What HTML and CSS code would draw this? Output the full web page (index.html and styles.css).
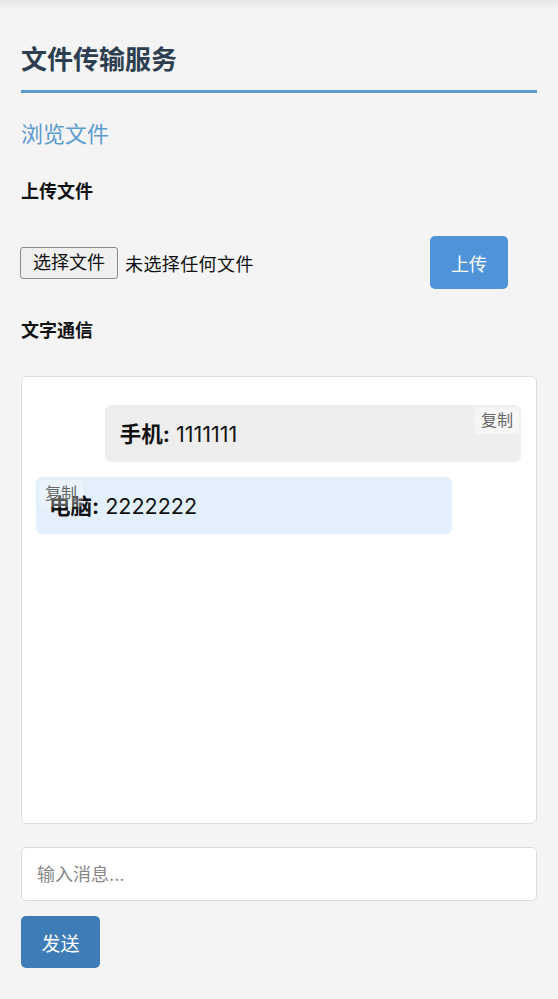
FILE: index.html
```html
<!DOCTYPE html>
<html lang="zh-CN">
<head>
    <meta charset="UTF-8">
    <meta name="viewport" content="width=device-width, initial-scale=1.0">
    <title>文件传输服务</title>
    <link rel="stylesheet" href="styles.css">
</head>
<body>
    <div class="container">
        <h1>文件传输服务</h1>

        <a class="browse-link" href="#">浏览文件</a>

        <h3>上传文件</h3>
        <form class="upload-form" onsubmit="return false;">
            <div class="file-picker">
                <span class="file-btn">选择文件</span>
                <span class="file-name">未选择任何文件</span>
            </div>
            <button class="upload-btn" type="submit">上传</button>
        </form>

        <h3>文字通信</h3>
        <div class="chat-box">
            <div class="message mine">
                <b>手机:</b> 1111111
                <span class="copy-btn">复制</span>
            </div>
            <div class="message other">
                <b>电脑:</b> 2222222
                <span class="copy-btn">复制</span>
            </div>
        </div>

        <input class="msg-input" type="text" placeholder="输入消息...">
        <button class="send-btn">发送</button>
    </div>
</body>
</html>
```

FILE: styles.css
```css
body {
    margin: 0;
    padding: 0;
    font-family: Inter, "Noto Sans CJK SC", sans-serif;
    background: linear-gradient(#e6e6e6, #f4f4f4 10px) no-repeat, #f4f4f4;
    color: #111;
}
.container {
    padding: 43px 21px 20px 21px;
}
h1 {
    margin: 0;
    font-size: 26px;
    line-height: 34px;
    color: #2c3e50;
    padding-bottom: 13px;
    border-bottom: 3px solid #5a9acf;
}
.browse-link {
    display: block;
    margin-top: 25px;
    font-size: 22px;
    line-height: 32px;
    color: #5a9bcf;
    text-decoration: none;
}
h3 {
    margin: 30px 0 0 0;
    font-size: 18px;
    line-height: 24px;
}
.upload-form {
    display: flex;
    align-items: center;
    justify-content: space-between;
    margin-top: 32px;
}
.file-picker {
    display: flex;
    align-items: center;
    font-size: 18px;
}
.file-btn {
    margin-left: -1px;
    padding: 2px 12px;
    background: #efefef;
    border: 1px solid #8a8a8a;
    border-radius: 3px;
    line-height: 26px;
}
.file-name {
    margin-left: 7px;
    letter-spacing: 0.4px;
}
.upload-btn {
    width: 78px;
    height: 53px;
    margin-right: 29px;
    background: #4f94d8;
    color: white;
    border: none;
    border-radius: 5px;
    font-family: inherit;
    font-size: 18px;
}
.upload-form + h3 {
    margin-top: 30px;
}
.chat-box {
    margin-top: 33px;
    height: 418px;
    padding: 28px 15px 0 15px;
    background: white;
    border: 1px solid #dcdcdc;
    border-radius: 6px;
}
.message {
    position: relative;
    width: 86%;
    height: 57px;
    box-sizing: border-box;
    padding: 0 15px;
    border-radius: 6px;
    font-size: 21.5px;
    line-height: 59px;
}
.message.mine {
    margin-left: auto;
    background: #eeeeee;
}
.message.other {
    margin-top: 15px;
    margin-left: -1px;
    padding-left: 13px;
    background: #e3f0fc;
}
.copy-btn {
    position: absolute;
    top: 2px;
    right: 2px;
    padding: 0 6px;
    font-size: 16px;
    line-height: 27px;
    color: #666;
    background: rgba(255, 255, 255, 0.45);
    border-radius: 3px;
}
.message.other .copy-btn {
    right: auto;
    left: 3px;
    top: 3px;
    background: rgba(255, 255, 255, 0.3);
}
.msg-input {
    display: block;
    width: 100%;
    box-sizing: border-box;
    height: 54px;
    margin-top: 23px;
    padding: 0 15px;
    border: 1px solid #dcdcdc;
    border-radius: 5px;
    font-family: inherit;
    font-size: 18px;
}
.msg-input::placeholder {
    color: #888;
}
.send-btn {
    display: block;
    width: 79px;
    height: 52px;
    margin-top: 15px;
    background: #3e7cb7;
    color: white;
    border: none;
    border-radius: 5px;
    font-family: inherit;
    font-size: 19px;
}
```
